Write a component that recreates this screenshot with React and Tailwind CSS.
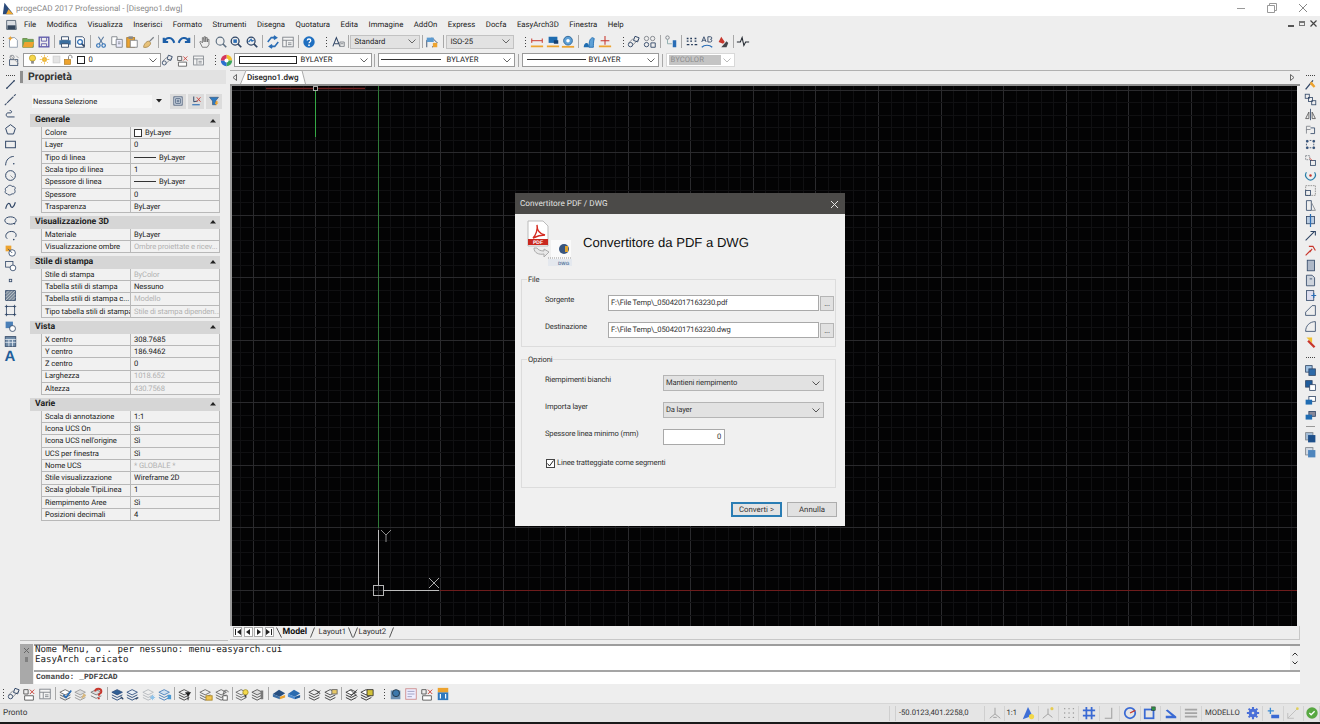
import React from "react";

const ui = { fontFamily: 'Roboto, "Noto Sans", sans-serif' };
const arial = { fontFamily: '"Liberation Sans", Arial, sans-serif' };

const Svg = ({ s = 14, children, vb = "0 0 16 16", cls = "" }) => (
  <svg width={s} height={s} viewBox={vb} fill="none" className={`shrink-0 ${cls}`}>{children}</svg>
);

const N = "#2f4565", B = "#2a6db5", O = "#eda32f", G = "#7b8087", R = "#c8362c";

const stackL = (c, extra, fill = "#eeeeee") => (
  <>
    <path d="M1 6l6-3 6 3-6 3z" fill={fill} stroke={c} />
    <path d="M1 9l6 3 6-3M1 12l6 3 6-3" stroke={c} strokeWidth="1.100" />
    {extra}
  </>
);

const icons = {
  new: <><path d="M4 3h6l3 3v8H4z" fill="#fff" stroke="#8a97a8" /><path d="M5 1l1 2 2 .5-2 1-1 2-1-2-2-1 2-.5z" fill={O} /></>,
  open: <><path d="M2 4h5l1 1h6v9H2z" fill="#6fae5a" stroke="#6b8a4c" /><path d="M2 14l2-6h11l-2 6z" fill={O} /></>,
  save: <><rect x="2.5" y="2.5" width="11" height="11" stroke="#5a55a8" strokeWidth="1.5" /><path d="M5 3v4h6V3M5 13v-3h6v3" stroke="#5a55a8" /></>,
  print: <><path d="M4 2h8v4H4z" fill="#fff" stroke={N} /><rect x="1.5" y="6" width="13" height="5" fill="#3b6f9f" /><path d="M4 10h8v4H4z" fill="#fff" stroke={N} /></>,
  preview: <><path d="M3 2h8l2 2v10H3z" fill="#fff" stroke={N} /><circle cx="8" cy="8" r="2.7" stroke={B} strokeWidth="1.4" /><path d="M10 10l3 3" stroke={N} strokeWidth="2" /></>,
  cut: <><path d="M5 2l5 8M11 2L6 10" stroke="#57779c" strokeWidth="1.2" /><circle cx="5" cy="12" r="2" stroke={B} strokeWidth="1.3" /><circle cx="11" cy="12" r="2" stroke={B} strokeWidth="1.3" /></>,
  copy: <><path d="M2 2h6v9H2z" fill="#fff" stroke={G} /><path d="M7 5h7v9H7z" fill="#eef" stroke={G} /><path d="M9 8h3M9 10h3" stroke={G} /></>,
  paste: <><rect x="2" y="3" width="9" height="11" fill={O} stroke="#a67a30" /><path d="M6 6h8v8H6z" fill="#fff" stroke={G} /><rect x="4" y="1.5" width="5" height="3" fill="#888" /></>,
  brush: <><path d="M9 7l5-5 1 1-5 5z" fill={G} /><path d="M3 14c0-3 3-7 6-7l2 2c0 3-4 6-8 5z" fill="#e8c27a" stroke="#a98a50" /></>,
  undo: <path d="M3 7c2-5 9-5 11 2M2 3v5h5" stroke="#1d5fa8" strokeWidth="2.4" />,
  redo: <path d="M13 7C11 2 4 2 2 9M14 3v5H9" stroke="#1d5fa8" strokeWidth="2.4" />,
  hand: <path d="M5 14L2 8l1-1 2 2V3l1.300 0 .7 5V2h1.500l.5 6V3h1.500l.5 5V5h1.500v6l-2 3z" fill="#eee" stroke="#666" strokeWidth=".9" />,
  zoom: <><circle cx="7" cy="7" r="4.500" stroke="#5c6e80" strokeWidth="1.300" /><path d="M10 10l4 4" stroke="#5c6e80" strokeWidth="1.800" /></>,
  zoomw: <><circle cx="7" cy="7" r="4.500" stroke={N} strokeWidth="1.500" /><rect x="5" y="5" width="4" height="4" fill={B} /><path d="M10 10l4 4" stroke={N} strokeWidth="2" /></>,
  zoomp: <><circle cx="7" cy="7" r="4.500" stroke={N} strokeWidth="1.500" /><path d="M4 8l3-3 1 2 2-1" stroke={B} strokeWidth="1.400" /><path d="M10 10l4 4" stroke={N} strokeWidth="2" /></>,
  regen: <path d="M2 8l4-5h5M14 8l-4 5H5M9 1l3 2-3 2M7 11l-3 2 3 2" stroke={B} strokeWidth="1.800" />,
  props: <><rect x="2" y="2.500" width="12" height="11" fill="#f4f4f4" stroke={G} /><path d="M2 6h12M6 6v7M8 9h4M8 11h4" stroke={G} /></>,
  help: <><circle cx="8" cy="8" r="6.500" fill="#1f6fc0" /><path d="M6 6.300C6 4 10 4 10 6.300 10 8 8 7.800 8 9.500" stroke="#fff" strokeWidth="1.500" /><circle cx="8" cy="11.600" r="1" fill="#fff" /></>,
  aa: <><path d="M1 13L5 3l4 10M3 10h4" stroke={N} strokeWidth="1.200" /><path d="M9 13V8h5v5zM10 10h3" stroke={G} /></>,
  dimst: <><path d="M2 14V6h6M8 3l6 6-6 5" stroke={N} strokeWidth="1" /><path d="M2 3h8v5H2z" fill="#5c9bd1" /><rect x="9" y="9" width="5" height="5" fill={O} /></>,
  dim1: <><path d="M2 4v5M14 4v5M2 6.500h12" stroke={R} strokeWidth="1.100" /><rect x="1" y="12" width="14" height="2" fill={O} /></>,
  dim2: <><rect x="3" y="2" width="10" height="7" fill="#1e6cb0" /><rect x="9" y="6" width="5" height="4" fill="#143f70" /><rect x="1" y="12" width="14" height="2" fill={O} /></>,
  dim3: <><circle cx="8" cy="6.500" r="5" fill="#5ea0d6" stroke="#2b6496" /><circle cx="8" cy="6.500" r="2" fill="#fff" /><rect x="1" y="12.500" width="14" height="2" fill={O} /></>,
  dim4: <><path d="M2 14c0-4 2-5 3-5 2 0 3 2 3 5z" fill="#1e6cb0" /><path d="M8 14c0-7 1-10 4-11l2 1c-1 4-1 7-1 10z" fill="#5ea0d6" stroke="#1e6cb0" /></>,
  dim5: <><path d="M8 1v10M3 6.500h10" stroke={R} strokeWidth="1.200" /><rect x="1" y="12" width="14" height="2" fill={O} /></>,
  blocks: <><path d="M2 9l5-5M6 12l7-7" stroke={G} /><circle cx="4" cy="11" r="2.500" stroke={N} /><rect x="8" y="2" width="5" height="5" stroke={N} transform="rotate(20 10 5)" /></>,
  blocks2: <><circle cx="4" cy="4" r="2.500" stroke={G} /><circle cx="11" cy="4" r="2.500" stroke={G} /><circle cx="4" cy="11" r="2.500" stroke={N} /><path d="M9 9h5v5H9z" stroke={N} /></>,
  xref: <><circle cx="4" cy="3" r="2" stroke={G} /><path d="M4 5v5h5" stroke="#8aa" /><path d="M10 6h4v8h-4z" fill={B} /></>,
  abc: <><path d="M2 4h2M6 4h2M11 4h2M2 7h2M6 7h2M11 7h2M2 11h3M7 11h2M11 11h3" stroke="#243a58" strokeWidth="1.600" /></>,
  ab: <><path d="M2 8l2.500-6L7 8M3 6h3M9 8V2h3c2 0 2 3 0 3 2 0 2 3 0 3z" stroke={N} strokeWidth="1" /><path d="M2 14c3-3 9-3 12 0" stroke={B} strokeWidth="1.300" /></>,
  spell: <><path d="M3 8l3-6 4 6-2 2z" fill={R} /><path d="M6 14l6-7 2 2-2 5z" fill="#44474c" /></>,
  pulse: <path d="M1 8h4l2-5 2 9 2-4h4" stroke="#20262e" strokeWidth="1.200" />,
  layerW: <><rect x="2" y="7" width="10" height="7" stroke={N} /><path d="M3 2l10 10M10 2l3 3" stroke="#999" /><circle cx="5" cy="4" r="2.500" stroke={G} /></>,
  bulb: <><circle cx="8" cy="6" r="4.500" fill="#f6d64a" stroke="#b89a20" /><rect x="6" y="10" width="4" height="4" fill="#8a8a8a" /></>,
  sun: <><circle cx="8" cy="8" r="3" fill="#f7c23c" stroke="#d99b1a" /><path d="M8 1v3M8 12v3M1 8h3M12 8h3M3 3l2 2M11 11l2 2M13 3l-2 2M5 11l-2 2" stroke="#f0b32a" /></>,
  grid: <rect x="3" y="3" width="10" height="10" fill="#e4e4e4" stroke="#ccc" />,
  lock: <><rect x="2" y="8" width="9" height="7" fill={O} stroke="#b07a20" /><path d="M8 8V4c0-3 5-3 5 0v2" stroke="#777" strokeWidth="1.300" /></>,
  wheel: <><path d="M8 8V1a7 7 0 0 1 7 7z" fill="#f2c12e" /><path d="M8 8h7a7 7 0 0 1-7 7z" fill="#3ba55c" /><path d="M8 8v7a7 7 0 0 1-7-7z" fill="#2b6fd0" /><path d="M8 8H1a7 7 0 0 1 7-7z" fill="#d4365e" /><circle cx="8" cy="8" r="2.500" fill="#fff" /></>,
  lineT: <><circle cx="3.500" cy="12.500" r="1" fill={G} /><circle cx="12.500" cy="3.500" r="1" fill={G} /><path d="M3 13L13 3" stroke={N} strokeWidth="1.500" /></>,
  xline: <path d="M1 15L15 1M5 11l6-6" stroke="#3a4c68" strokeWidth="1.300" strokeDasharray="3 1" />,
  pline: <path d="M13 11H5C2 11 2 6 5 6h3C10 6 10 3 7 3" stroke={N} strokeWidth="1.200" />,
  poly: <path d="M8 2l6 4.500-2.300 7H4.300L2 6.500z" stroke={N} strokeWidth="1.200" />,
  rect: <rect x="2" y="4" width="12" height="8" stroke={N} strokeWidth="1.200" />,
  arc: <><path d="M2 14C2 7 7 3 12 3" stroke={N} strokeWidth="1.200" /><circle cx="12" cy="12" r="1" fill={N} /></>,
  circle: <><circle cx="8" cy="8" r="6" stroke={N} strokeWidth="1.200" /><path d="M8 8l3 3" stroke={G} /></>,
  cloud: <path d="M4 4c1-3 5-3 6-1 3-1 5 2 3 4 2 3-1 6-3 5-2 2-5 2-6 0-3 0-3-3-2-4-1-2 0-4 2-4z" stroke={N} strokeWidth="1.100" />,
  spline: <path d="M2 12c2-8 5-8 6-4s4 3 6-4" stroke={N} strokeWidth="1.400" />,
  ellipse: <><ellipse cx="8" cy="8" rx="7" ry="4.500" stroke={N} strokeWidth="1.200" /><circle cx="13" cy="12" r="1" fill={N} /></>,
  earc: <><path d="M4 12C0 9 3 3 9 3s7 5 5 7" stroke={N} strokeWidth="1.200" /><circle cx="12" cy="13" r="1" fill={N} /></>,
  ins: <><path d="M2 2h7v7H2z" fill={O} /><circle cx="10" cy="11" r="4" stroke={N} fill="#fff" /><path d="M5 6l5 5" stroke={N} /></>,
  mkb: <><rect x="2" y="3" width="9" height="7" stroke={N} /><circle cx="11" cy="11" r="3.500" stroke={N} fill="#fff" /></>,
  point: <rect x="6.500" y="6.500" width="3" height="3" stroke={N} />,
  hatch: <><rect x="2" y="2" width="12" height="12" fill="#7b8a9a" stroke={N} /><path d="M2 6l4-4M2 10l8-8M2 14L14 2M6 14l8-8M10 14l4-4" stroke="#e4e4e4" strokeWidth=".7" /></>,
  region: <><path d="M3 3h10v10H3z" stroke={N} /><path d="M3 1v4M13 1v4M3 11v4M13 11v4M1 3h4M11 3h4M1 13h4M11 13h4" stroke={N} /></>,
  wipe: <><rect x="2" y="2" width="9" height="8" fill="#4b80b8" /><rect x="7" y="7" width="7" height="7" rx="3" fill="#fff" stroke={N} /></>,
  table: <><rect x="1.500" y="2" width="13" height="12" fill="#6f8aa6" stroke={N} /><path d="M1.500 5.500h13M1.500 9h13M6 5.500V14M10.500 5.500V14" stroke="#e8eef4" /></>,
  erase: <><path d="M2 14L11 3" stroke={N} strokeWidth="1.600" /><path d="M9 4l5 6-2 2-5-5z" fill={O} /></>,
  copy2: <><rect x="1.500" y="1.500" width="5" height="5" stroke={N} /><rect x="5.500" y="5.500" width="5" height="5" stroke={N} /><rect x="9.500" y="9.500" width="5" height="5" stroke={N} /></>,
  mirror: <><path d="M8 1v14" stroke={N} /><path d="M6 5L2 13h4zM10 5l4 8h-4z" stroke="#555" /></>,
  offs: <><path d="M3 9V4h5M3 13V8h5" stroke={G} /><path d="M8 6h5v7H8" stroke={N} /></>,
  array: <><path d="M3 3h2v2H3zM11 3h2v2h-2zM3 11h2v2H3zM11 11h2v2h-2z" fill={B} stroke={N} /><path d="M7 3h2M7 12h2M3 7v2M12 7v2" stroke={N} /></>,
  move: <><rect x="2" y="2" width="5" height="5" stroke={G} strokeDasharray="2 1" /><rect x="8" y="8" width="6" height="6" stroke={N} /><path d="M7 5l3 3" stroke={R} /></>,
  rotate: <><path d="M3 4a6 6 0 1 0 10 0" stroke="#2a7ea8" strokeWidth="1.500" /><circle cx="8" cy="8" r="1.500" fill={R} /></>,
  scale: <><rect x="2" y="2" width="12" height="12" stroke="#888" strokeDasharray="2 1" /><rect x="2" y="8" width="6" height="6" stroke={N} /></>,
  stretch: <><path d="M3 2h6v12H3z" stroke={N} /><path d="M9 4l5 10H9" stroke={G} /></>,
  trim: <><rect x="3" y="3" width="10" height="9" stroke={N} fill="#b9cbe0" /><path d="M8 0v16" stroke={B} strokeWidth="1.500" /></>,
  extend: <path d="M2 14L13 3M8 3h6v5" stroke={N} strokeWidth="1.300" />,
  breakk: <path d="M2 14L8 8M6 3h5l3 5M10 6l-3 4" stroke={R} strokeWidth="1.400" />,
  page: <rect x="4" y="1.500" width="9" height="13" fill="#aeb8c8" stroke={N} />,
  page2: <path d="M3 1.500h7l3 3v10H3zM7 6h3" fill="#cdd3dc" stroke={N} />,
  page3: <><rect x="3" y="2" width="9" height="12" fill="#dde" stroke={N} /><path d="M9 8h6M12 5v6" stroke={B} strokeWidth="1.500" /></>,
  chamfer: <path d="M2 14V10L10 2h4v12z" fill="#eee" stroke={N} strokeWidth="1" />,
  fillet: <path d="M2 14C2 7 7 2 14 2v12z" fill="#eee" stroke={N} strokeWidth="1" />,
  explode: <><path d="M3 3h7v7z" fill="#f1c232" /><path d="M6 6l8 8-2 2-8-8z" fill={R} /></>,
  stack1: <><rect x="2" y="2" width="8" height="8" fill="#9ec1e2" stroke={N} /><rect x="6" y="6" width="8" height="8" fill="#2e6aa8" stroke={N} /></>,
  stack2: <><rect x="2" y="2" width="8" height="8" fill="#1f5c9c" stroke={N} /><rect x="7" y="7" width="7" height="7" fill="#fff" stroke={N} /></>,
  stack3: <><rect x="6" y="3" width="8" height="6" fill="#fff" stroke={N} /><rect x="2" y="7" width="8" height="6" fill="#1f6cb2" /></>,
  stack4: <><rect x="6" y="3" width="8" height="6" fill="#889" stroke={N} /><rect x="2" y="7" width="8" height="6" fill="#1f6cb2" /></>,
  stack5: <><rect x="2" y="2" width="9" height="9" fill="#a5bdd6" stroke={G} /><rect x="5" y="5" width="9" height="9" fill="#1d4f8a" /></>,
  stack6: <><rect x="2" y="2" width="9" height="9" fill="#cfd8e4" stroke={G} /><rect x="5" y="5" width="9" height="9" fill="#4e85bd" /></>,
  selc: <><rect x="5" y="3" width="10" height="10" fill="#eee" stroke={G} /><path d="M1 9l3-5 3 5z" fill="none" stroke={N} /><path d="M3 2l8 8" stroke={G} /></>,
  filt: <><path d="M2 3h12L10 8v5H6V8z" fill="#2d7ac0" stroke={N} strokeWidth=".7" /><path d="M11 8l-2 4h2l-1 3 4-5h-2l1-2z" fill={O} /></>,
  qs: <><rect x="2.500" y="2.500" width="11" height="11" fill="#e2e8f0" stroke={N} /><rect x="5" y="5" width="6" height="6" stroke={N} /><path d="M8 6v4M6 8h4" stroke={N} /></>,
  ss: <><path d="M5 2v7l5-1" stroke={N} strokeWidth="1.300" /><path d="M9 3l5 6M14 3l-5 6" stroke={R} strokeWidth="1.100" /><path d="M3 13h10" stroke={B} strokeWidth="1.500" /></>,
  web: <><rect x="2" y="4" width="11" height="10" fill="#6c90b3" /><circle cx="8" cy="7" r="4" fill="#3c78ac" stroke="#234" /></>,
  dwgbox: <><rect x="2" y="2" width="12" height="12" fill="#eef" stroke="#c88" /><path d="M4 5h8M4 8h8M4 11h5" stroke="#99b" /></>,
  attach: <><path d="M2 3h5v5H2z" stroke="#555" /><path d="M9 3l5 5M14 3l-5 5" stroke={R} /><path d="M3 10h10v5H3z" fill="#fff" stroke="#555" /></>,
  pdfi: <><rect x="2" y="6" width="12" height="9" fill="#2f78bd" /><rect x="2" y="1" width="12" height="5" fill={O} /><path d="M5 8v5M11 8v5" stroke="#fff" strokeWidth="1.300" /></>,
  tri: <path d="M8 2v7M8 9l-6 5M8 9l6 5M6 13h4" stroke="#9a9a9a" strokeWidth="1" />,
  triB: <><path d="M2 15L8 1l5 10z" fill="#3f6fd6" /><circle cx="12" cy="12" r="3" fill="#f2d84a" /></>,
  triS: <><path d="M8 3v6M8 9l-6 5M8 9l5 4" stroke="#9a9a9a" /><circle cx="12.500" cy="3" r="1.800" fill="#e5cb50" /></>,
  dots: <path d="M3 3h.1M8 3h.1M13 3h.1M3 8h.1M8 8h.1M13 8h.1M3 13h.1M8 13h.1M13 13h.1" stroke="#9a9a9a" strokeWidth="1.600" strokeLinecap="round" />,
  gridB: <path d="M1 5h14M1 11h14M5 1v14M11 1v14" stroke="#3a6ad4" strokeWidth="2" />,
  ortho: <path d="M10 2v12H2" stroke="#a0a0a0" strokeWidth="1.200" />,
  polar: <><circle cx="8" cy="8" r="6" stroke="#3a6ad4" strokeWidth="2" /><path d="M8 8l6-3" stroke={R} strokeWidth="1.400" /></>,
  osnap: <><rect x="2" y="4" width="10" height="10" stroke="#3a6ad4" strokeWidth="2" /><rect x="10" y="1" width="4" height="4" fill="#2f8f46" stroke="#111" strokeWidth=".5" /></>,
  otrack: <path d="M2 14h12V12L4 4 2 5l7 6H2z" fill="#3a6ad4" />,
  lw: <path d="M1 4h14M1 8h14M1 12h14" stroke="#a5a5a5" strokeWidth="2" />,
  gear: <><circle cx="8" cy="8" r="5" fill="#4a6fd8" /><path d="M8 1v14M1 8h14M3 3l10 10M13 3L3 13" stroke="#4a6fd8" strokeWidth="2.400" /><circle cx="8" cy="8" r="1.500" fill="#ddd" /></>,
  plus: <><path d="M5 2v7M2 5.500h7" stroke="#3a8ad4" strokeWidth="1.500" /><rect x="6" y="10" width="9" height="4" fill="#3a6ad4" /></>,
  axis: <><path d="M2 14L13 3M2 14V8M2 14h7" stroke="#bbb" /><circle cx="13" cy="3" r="1.500" fill="#e0cf58" /></>,
  ok: <><circle cx="8" cy="8" r="6.500" fill="#58a842" /><path d="M5 8l2 2 4-4" stroke="#fff" strokeWidth="1.500" /></>,
  lCheck: stackL("#666", <path d="M5 9l3 3 6-8" stroke={B} strokeWidth="1.800" />, "#fff"),
  lOrange: stackL("#999", <path d="M8 14l6-4-3-3z" fill="#d8b67a" />, "#ddd"),
  lRed: <><path d="M1 6l6-3 6 3-6 3z" fill="#ddd" stroke="#777" /><path d="M1 10l6 3 6-3" stroke="#777" /><path d="M6 5c0-4 7-4 7 0 0 3-3 2-3 5M10 12v2" stroke={R} strokeWidth="2.200" /></>,
  lNavy: stackL("#2f4f7f", <path d="M11 11l3 3" stroke={N} strokeWidth="1.500" />, "#2f5f95"),
  lNavy2: stackL("#2f4f7f", <path d="M11 14l3-2" stroke={N} strokeWidth="1.500" />, "#e8eef5"),
  lStar: stackL("#b5b9be", <path d="M12 9v6M9 12h6M10 10l4 4M14 10l-4 4" stroke="#88c0ea" />, "#eee"),
  lBlue: stackL("#4a7fb8", <rect x="11" y="9" width="4" height="5" fill="#4a9ad4" />, "#cfe0f0"),
  lFun: stackL("#444", <path d="M8 6h7l-3 4v5h-1v-5z" fill="#222" />, "#eee"),
  lLock: <>{stackL("#666", null, "#eee")}<rect x="8" y="10" width="7" height="5" fill="#f1c64e" stroke="#a8862a" /></>,
  lUnl: <>{stackL("#666", null, "#eee")}<path d="M10 9V6c0-3 5-3 5 0" stroke="#555" /><rect x="9" y="10" width="5" height="5" fill="#fff" stroke="#555" /></>,
  lBulb: <>{stackL("#666", null, "#eee")}<circle cx="12" cy="6" r="3" fill="#f4d94c" stroke="#a8962a" /><rect x="11" y="9" width="2" height="3" fill="#444" /></>,
  lGray: stackL("#555", <path d="M11 4h3v10h-3z" fill="#777" />, "#ddd"),
  lSolid: <><path d="M1 8l7-5 7 4-6 4z" fill="#274f80" /><path d="M1 8v3l8 3V11z" fill="#3a6ea5" /><path d="M9 14l6-2V9l-6 2z" fill={O} /></>,
  lSolid2: <><path d="M1 8l7-5 7 4-6 4z" fill="#2a6bb0" /><path d="M1 8v3l8 3V11z" fill="#4a8ad0" /><path d="M9 14l6-2V9l-6 2z" fill="#1f5a9a" /></>,
  lS1: stackL("#444", <path d="M10 4l4 4M14 4l-4 4" stroke="#444" />, "#eee"),
  lS2: stackL("#444", <rect x="9" y="3" width="6" height="5" fill="#e8c866" stroke="#666" />, "#eee"),
  lS3: stackL("#333", <path d="M6 3l8 8M14 3L6 11" stroke="#333" />, "#fff"),
  lS4: stackL("#333", <path d="M8 3h7v7H8z" fill="#d3c23a" stroke="#333" />, "#fff"),
};

const Ic = ({ n, s = 14, w = 15.6 }) => (
  <div className="flex items-center justify-center shrink-0" style={{ width: w }}>
    <Svg s={s}>{icons[n]}</Svg>
  </div>
);

const Sep = ({ w = 5.2 }) => (
  <div className="flex justify-center shrink-0" style={{ width: w }}>
    <div className="w-px h-[13px] bg-[#a8a8a8]" />
  </div>
);

const Grip = () => (
  <div className="flex flex-col gap-[2px] w-[1px] shrink-0">
    {[0, 1, 2, 3].map((i) => <div key={i} className="w-px h-px bg-[#444]" />)}
  </div>
);

const Row = ({ items }) =>
  items.map((it, i) =>
    it === "|" ? <Sep key={i} /> : <Ic key={i} n={it} />
  );

const Chevron = ({ c = "#666" }) => (
  <svg width="8" height="5" viewBox="0 0 8 5" fill="none" className="shrink-0">
    <path d="M.5 .5L4 4l3.500-3.500" stroke={c} />
  </svg>
);

const Combo = ({ w, children, grey, faint }) => (
  <div
    className={`flex items-center h-[14px] px-[2px] border shrink-0 text-[7.700px] text-[#222] ${grey ? "bg-[#e2e2e2] border-[#c2c2c2]" : faint ? "bg-white border-[#d8d8d8]" : "bg-white border-[#9a9a9a]"}`}
    style={{ width: w, ...ui }}
  >
    <div className="flex-1 flex items-center min-w-0">{children}</div>
    <div className="pr-[1px]"><Chevron c={faint ? "#bbb" : "#666"} /></div>
  </div>
);

const menus = ["File", "Modifica", "Visualizza", "Inserisci", "Formato", "Strumenti", "Disegna", "Quotatura", "Edita", "Immagine", "AddOn", "Express", "Docfa", "EasyArch3D", "Finestra", "Help"];

const TitleBar = () => (
  <div className="h-[16px] bg-white flex items-center shrink-0">
    <svg width="13" height="13" viewBox="0 0 16 16" className="ml-[2px]"><path d="M1 15L3 1l11 14z" fill="#2a4a7a" /><path d="M8 9l6 6H5z" fill="#efa82f" /></svg>
    <div className="ml-[1px] text-[8.150px] text-[#8a8a8a]" style={ui}>progeCAD 2017 Professional - [Disegno1.dwg]</div>
    <div className="ml-auto flex items-center">
      <svg width="10" height="10" viewBox="0 0 10 10" className="mr-[21px]"><path d="M1 5.500h8" stroke="#999" /></svg>
      <svg width="10" height="10" viewBox="0 0 10 10" className="mr-[21px]"><path d="M.5 2.500h7v7h-7zM2.500 2.500V.5h7v7h-2" stroke="#999" fill="none" /></svg>
      <svg width="10" height="10" viewBox="0 0 10 10" className="mr-[12px]"><path d="M1 1l8 8M9 1L1 9" stroke="#888" /></svg>
    </div>
  </div>
);

const MenuBar = () => (
  <div className="h-[17px] flex items-center shrink-0 text-[7.800px] text-[#222]" style={ui}>
    <svg width="13" height="13" viewBox="0 0 16 16" className="ml-[5px] mr-[6px]">
      <path d="M2 3h11l1 11H2z" fill="#d9dde2" stroke="#4a5a6a" /><path d="M3 9h10v5H3z" fill="#33465c" />
    </svg>
    <div className="flex gap-[10.500px]">
      {menus.map((m) => <span key={m}>{m}</span>)}
    </div>
    <div className="ml-auto flex items-center gap-[5px] pr-[3px] pb-[2px]">
      <div className="w-[6px] h-[2px] mt-[4px] bg-[#555]" />
      <div className="w-[6px] h-[5px] border border-[#777] border-t-2" />
      <svg width="7" height="7" viewBox="0 0 7 7"><path d="M.5 .5l6 6M6.500 .5l-6 6" stroke="#444" strokeWidth="1.200" /></svg>
    </div>
  </div>
);

const Toolbar1 = () => (
  <div className="h-[17px] flex items-center shrink-0 pl-[3px]">
    <Grip />
    <div className="w-[1px]" />
    <Row items={["new", "open", "save", "|", "print", "preview", "|", "cut", "copy", "paste", "brush", "|", "undo", "redo", "|", "hand", "zoom", "zoomw", "zoomp", "|", "regen", "props", "|", "help"]} />
    <div className="w-[9px]" />
    <Grip />
    <div className="w-[4px]" />
    <Ic n="aa" />
    <Sep w={4} />
    <Combo w={70} grey><span className="pl-[1px]">Standard</span></Combo>
    <Sep w={4} />
    <Ic n="dimst" w={16} />
    <Sep w={6} />
    <Combo w={68} grey><span className="pl-[1px]">ISO-25</span></Combo>
    <div className="w-[11px]" />
    <Grip />
    <div className="w-[3px]" />
    <Row items={["dim1", "dim2", "dim3", "|", "dim4", "dim5"]} />
    <div className="w-[10px]" />
    <Grip />
    <div className="w-[3px]" />
    <Row items={["blocks", "blocks2", "|", "xref", "|", "abc", "ab", "spell", "|", "pulse"]} />
  </div>
);

const Line = ({ w }) => <div className="h-px bg-[#333] shrink-0" style={{ width: w }} />;

const Toolbar2 = () => (
  <div className="h-[20px] flex items-center shrink-0 pl-[3px]">
    <Grip />
    <div className="w-[3px]" />
    <Ic n="layerW" s={13} />
    <Combo w={138}>
      <div className="flex items-center gap-[1px] pl-[1px]">
        <Ic n="bulb" s={11} w={11} />
        <Ic n="sun" s={11} w={11} />
        <Ic n="grid" s={11} w={11} />
        <Ic n="lock" s={11} w={11} />
        <div className="w-[8px] h-[8px] border border-[#222] bg-white ml-[2px]" />
        <span className="ml-[3px]">0</span>
      </div>
    </Combo>
    <Ic n="blocks" s={13} w={14} />
    <Ic n="attach" s={13} w={15} />
    <Ic n="props" s={13} w={17} />
    <div className="w-[8px]" />
    <Grip />
    <div className="w-[4px]" />
    <Ic n="wheel" s={13} w={13} />
    <div className="w-[1px]" />
    <Combo w={138}>
      <div className="w-[58px] h-[8px] border border-[#222] bg-white ml-[2px] shrink-0" />
      <span className="ml-[4px]">BYLAYER</span>
    </Combo>
    <Sep w={6} />
    <Combo w={137}>
      <Line w={60} />
      <span className="ml-[6px]">BYLAYER</span>
    </Combo>
    <Sep w={7} />
    <Combo w={137}>
      <div className="ml-[2px]" />
      <Line w={59} />
      <span className="ml-[3px]">BYLAYER</span>
    </Combo>
    <Sep w={7} />
    <Combo w={69} faint>
      <div className="w-[52px] h-[10px] bg-[#c4c4c4] flex items-center text-[#8e8e8e] pl-[2px]">BYCOLOR</div>
    </Combo>
  </div>
);

const leftTools = ["lineT", "xline", "pline", "poly", "rect", "arc", "circle", "cloud", "spline", "ellipse", "earc", "ins", "mkb", "point", "hatch", "region", "wipe", "table"];

const LeftBar = () => (
  <div className="w-[20px] shrink-0 flex flex-col items-center pt-[5px]">
    <div className="w-[9px] h-px mb-[1px] border-t border-dotted border-[#444]" />
    {leftTools.map((t, i) => (
      <div key={i} className="h-[15.100px] flex items-center justify-center"><Svg s={13}>{icons[t]}</Svg></div>
    ))}
    <div className="text-[15px] leading-[16px] text-[#1f5e9a] font-bold" style={arial}>A</div>
  </div>
);

const groups = [
  ["Generale", [
    ["Colore", "ByLayer", "box"], ["Layer", "0"], ["Tipo di linea", "ByLayer", "line"], ["Scala tipo di linea", "1"],
    ["Spessore di linea", "ByLayer", "line"], ["Spessore", "0"], ["Trasparenza", "ByLayer"],
  ]],
  ["Visualizzazione 3D", [["Materiale", "ByLayer"], ["Visualizzazione ombre", "Ombre proiettate e ricev...", "dis"]]],
  ["Stile di stampa", [
    ["Stile di stampa", "ByColor", "dis"], ["Tabella stili di stampa", "Nessuno"], ["Tabella stili di stampa c...", "Modello", "dis"],
    ["Tipo tabella stili di stampa", "Stile di stampa dipenden...", "dis"],
  ]],
  ["Vista", [["X centro", "308.7685"], ["Y centro", "186.9462"], ["Z centro", "0"], ["Larghezza", "1018.652", "dis"], ["Altezza", "430.7568", "dis"]]],
  ["Varie", [
    ["Scala di annotazione", "1:1"], ["Icona UCS On", "Sì"], ["Icona UCS nell'origine", "Sì"], ["UCS per finestra", "Sì"],
    ["Nome UCS", "* GLOBALE *", "dis"], ["Stile visualizzazione", "Wireframe 2D"], ["Scala globale TipiLinea", "1"], ["Riempimento Aree", "Sì"], ["Posizioni decimali", "4"],
  ]],
];

const Panel = () => (
  <div className="w-[210px] shrink-0 text-[#222]" style={ui}>
    <div className="h-[14px] w-[206px] bg-[#e2e2e2] flex items-center">
      <div className="w-[3px] h-[12px] bg-[#8f8f8f] mr-[5px]" />
      <span className="text-[10.500px] font-bold text-[#333]">Proprietà</span>
    </div>
    <div className="flex items-center h-[14px] mt-[10px] pl-[12px]">
      <div className="w-[120px] h-[13px] bg-[#f6f6f6] pl-[1px] text-[7.600px] leading-[13px]">Nessuna Selezione</div>
      <svg width="6" height="4" viewBox="0 0 6 4" className="ml-[4px]"><path d="M0 0h6L3 3.500z" fill="#222" /></svg>
      <div className="flex gap-[2px] ml-[8px]">
        {["qs", "ss", "filt"].map((n) => (
          <div key={n} className="w-[16px] h-[15px] bg-[#dcdcdc] flex items-center justify-center"><Svg s={12}>{icons[n]}</Svg></div>
        ))}
      </div>
    </div>
    <div className="ml-[10px] w-[190px] mt-[6px] flex flex-col gap-[2.500px]">
      {groups.map(([title, rows]) => (
        <div key={title}>
          <div className="h-[13px] bg-[#d6d6d6] flex items-center justify-between pl-[5px] pr-[4px] text-[8.700px] font-bold">
            <span>{title}</span>
            <svg width="6" height="4" viewBox="0 0 6 4"><path d="M0 3.500h6L3 0z" fill="#222" /></svg>
          </div>
          <div className="ml-[11px] border-x border-[#b8b8b8]">
            {rows.map(([k, v, kind]) => (
              <div key={k} className="flex h-[12.320px] border-b border-[#b8b8b8] bg-[#f1f1f1] text-[7.600px] tracking-[-0.05px]">
                <div className="w-[89px] shrink-0 pl-[3px] flex items-center border-r border-[#b8b8b8] whitespace-nowrap overflow-hidden">{k}</div>
                <div className={`flex-1 pl-[3px] flex items-center whitespace-nowrap overflow-hidden ${kind === "dis" ? "text-[#b2b2b2] tracking-[-0.12px]" : ""}`}>
                  {kind === "box" && <div className="w-[8px] h-[8px] border border-[#333] bg-white mr-[3px]" />}
                  {kind === "line" && <div className="w-[22px] h-px bg-[#333] mr-[3px]" />}
                  {v}
                </div>
              </div>
            ))}
          </div>
        </div>
      ))}
    </div>
  </div>
);

const Canvas = () => {
  const vs = [], hs = [];
  for (let i = -2; i < 90; i++) vs.push(252.500 + i * 12.51);
  for (let i = -2; i < 50; i++) hs.push(89.500 + i * 12.51);
  return (
    <svg width="1065" height="540" viewBox="232 86 1065 540" className="block bg-[#030304]">
      {vs.map((x, i) => <path key={i} d={`M${Math.round(x) + 0.5} 86V626`} stroke={(i - 2) % 5 === 0 ? "#2a2a2d" : "#101012"} />)}
      {hs.map((y, i) => <path key={i} d={`M232 ${Math.round(y) + 0.5}H1297`} stroke={(i - 2) % 5 === 0 ? "#2a2a2d" : "#101012"} />)}
      <path d="M378.500 86V528" stroke="#2f7a38" />
      <path d="M315.500 90V137" stroke="#35a845" />
      <path d="M266 88.500H365" stroke="#6b1f1f" strokeWidth="1.300" />
      <rect x="313.500" y="86.500" width="4" height="4" stroke="#aaa" />
      <path d="M440 590.500H1297" stroke="#6e1c1c" />
      <path d="M378.500 530V585M383 590.500H439" stroke="#bdbdbd" />
      <rect x="373.500" y="585.500" width="10" height="10" stroke="#b5b5b5" fill="none" />
      <path d="M381 530l5 5 5-5M386 535v7" stroke="#8c8c8c" />
      <path d="M429 578l10 10M439 578l-10 10" stroke="#a8a8a8" />
    </svg>
  );
};

const Nav = ({ d }) => (
  <div className="w-[9px] h-[10px] bg-white border border-[#aaa] flex items-center justify-center">
    <svg width="6" height="6" viewBox="0 0 6 6"><path d={d} fill="#222" /></svg>
  </div>
);

const Slash = ({ back, w = 7 }) => (
  <svg width={w} height="11" viewBox={`0 0 ${w} 11`} className="shrink-0">
    <path d={back ? `M.5 .5L${w - 0.5} 10.500` : `M.5 10.500L${w - 0.5} .5`} stroke="#555" fill="none" />
  </svg>
);

const Drawing = () => (
  <div className="w-[1070px] shrink-0 flex flex-col border-t border-[#b0b0b0]">
    <div className="h-[15px] flex items-end pl-[2px] pr-[4px] border-b-2 border-[#8f8f8f] bg-[#eeeeee]">
      <svg width="5" height="7" viewBox="0 0 5 7" className="mb-[3px]"><path d="M4.500 .5L1 3.500l3.500 3z" stroke="#666" fill="none" /></svg>
      <svg width="7" height="14" viewBox="0 0 7 14" className="ml-[3px] shrink-0"><path d="M0 14L6 0h1v14z" fill="#fff" /><path d="M.5 14L6 .5h1" stroke="#aaa" fill="none" /></svg>
      <div className="h-[14px] w-[54px] flex items-center bg-white border-t border-[#aaa] text-[8.100px] font-medium text-[#222]" style={ui}>Disegno1.dwg</div>
      <svg width="5" height="14" viewBox="0 0 5 14" className="shrink-0"><path d="M0 .5h1L5 14H0z" fill="#fff" /><path d="M0 .5h1L4.500 14" stroke="#aaa" fill="none" /></svg>
      <svg width="5" height="7" viewBox="0 0 5 7" className="ml-auto mr-[1px] mb-[3px]"><path d="M.5 .5L4 3.500.5 6.500z" stroke="#666" fill="none" /></svg>
    </div>
    <div className="flex border-l-2 border-[#9a9a9a]"><Canvas /></div>
    <div className="h-[14px] flex items-center pb-[1px] pl-[3px] border-b border-[#c8c8c8] border-r text-[7.800px] text-[#333]" style={ui}>
      <div className="flex gap-[1.500px]">
        <Nav d="M0 0h1v6H0zM6 0L2 3l4 3z" />
        <Nav d="M5 0L1 3l4 3z" />
        <Nav d="M1 0l4 3-4 3z" />
        <Nav d="M5 0h1v6H5zM0 0l4 3-4 3z" />
      </div>
      <div className="w-[2px]" />
      <Slash back w={6} />
      <span className="w-[28px] pl-[1px] pt-[1px] font-bold text-[8.800px] leading-[11px] text-[#111]">Model</span>
      <Slash w={5} />
      <div className="w-[4px]" />
      <span className="w-[29px] whitespace-nowrap">Layout1</span>
      <Slash back w={5} />
      <Slash w={5} />
      <span className="w-[31px] pl-[1px] whitespace-nowrap">Layout2</span>
      <Slash w={5} />
    </div>
  </div>
);

const rightTop = ["erase", "copy2", "mirror", "offs", "array", "move", "rotate", "scale", "stretch", "trim", "extend", "breakk", "page", "page2", "page3", "chamfer", "fillet", "explode"];
const rightBottom = ["stack1", "stack2", "stack3", "stack4"];
const rightBottom2 = ["stack5", "stack6"];

const RTool = ({ n }) => <div className="h-[15.100px] flex items-center justify-center"><Svg s={13}>{icons[n]}</Svg></div>;

const RightBar = () => (
  <div className="w-[20px] shrink-0 flex flex-col items-center pt-[5px]">
    <div className="w-[9px] border-t border-dotted border-[#444] mb-[1px]" />
    {rightTop.map((t) => <RTool key={t} n={t} />)}
    <div className="w-[9px] border-t border-dotted border-[#444] mt-[8px] mb-[5px]" />
    {rightBottom.map((t) => <RTool key={t} n={t} />)}
    <div className="w-[9px] h-px bg-[#999] my-[3px]" />
    {rightBottom2.map((t) => <RTool key={t} n={t} />)}
  </div>
);

const Command = () => (
  <div className="h-[44px] shrink-0 pl-[20px] pr-[20px]">
    <div className="h-px w-[208px] bg-[#bdbdbd]" />
    <div className="h-[3px]" />
    <div className="h-[40px] flex">
      <div className="w-[13px] bg-[#a9a9a9] flex flex-col items-center pt-[3px] gap-[3px]">
        <svg width="7" height="7" viewBox="0 0 7 7"><path d="M1 1l5 5M6 1L1 6" stroke="#666" /></svg>
        <div className="w-[3px] h-[5px] bg-[#808080]" />
      </div>
      <div className="w-[1px]" />
      <div className="flex-1 flex flex-col">
        <div className="h-[26px] flex border-t-2 border-[#9d9d9d] bg-white">
          <div className="flex-1 pl-[1px] text-[9.150px] leading-[9.500px] text-[#222] whitespace-pre" style={{ fontFamily: '"DejaVu Sans Mono", monospace' }}>
            {"Nome Menu, o . per nessuno: menu-easyarch.cui\nEasyArch caricato"}
          </div>
          <div className="w-[10px] flex flex-col items-center gap-[5px] pt-[6px] bg-[#f1f1f1]">
            <svg width="6" height="4" viewBox="0 0 6 4"><path d="M.5 3.500L3 1l2.500 2.500" stroke="#333" fill="none" /></svg>
            <svg width="6" height="4" viewBox="0 0 6 4"><path d="M.5 .5L3 3 5.500 .5" stroke="#333" fill="none" /></svg>
          </div>
        </div>
        <div className="h-[14px] border-t-2 border-[#a5a5a5] bg-white pl-[2px] text-[8px] leading-[12px] font-bold text-[#444]" style={{ fontFamily: '"Liberation Mono", monospace' }}>Comando: _PDF2CAD</div>
      </div>
    </div>
  </div>
);

const BottomBar = () => (
  <div className="h-[19px] shrink-0 flex items-center pl-[3px]">
    <Grip />
    <div className="w-[2px]" />
    <Row items={["blocks", "attach", "props", "|", "lCheck", "lOrange", "lRed", "|", "lNavy", "lNavy2", "lStar", "lBlue", "|", "lFun", "|", "lLock", "lUnl", "|", "lBulb", "lGray", "|", "lSolid", "lSolid2", "|", "lS1", "lS2", "|", "lS3", "lS4"]} />
    <div className="w-[9px]" />
    <Grip />
    <div className="w-[3px]" />
    <Row items={["web", "dwgbox", "attach", "pdfi"]} />
  </div>
);

const SbI = ({ n, w = 20.4 }) => (
  <div className="h-[15px] flex items-center justify-center border-r border-[#d2d2d2] shrink-0" style={{ width: w }}><Svg s={14}>{icons[n]}</Svg></div>
);

const Status = () => (
  <div className="h-[19px] shrink-0 flex items-center bg-[#e5e5e5] text-[7.700px] text-[#333] border-t border-[#d6d6d6]" style={ui}>
    <span className="ml-[3px] text-[8.200px]">Pronto</span>
    <div className="ml-auto w-px h-[15px] bg-[#cfcfcf]" />
    <div className="w-[5px]" />
    <div className="w-px h-[15px] bg-[#cfcfcf]" />
    <div className="w-[88px] pl-[3px] whitespace-nowrap">-50.0123,401.2258,0</div>
    <div className="w-px h-[15px] bg-[#cfcfcf]" />
    <SbI n="tri" />
    <span className="w-[13px] text-center">1:1</span>
    {["triB", "triS", "dots", "gridB", "ortho", "polar", "osnap", "otrack", "lw"].map((n) => <SbI key={n} n={n} />)}
    <span className="w-[41px] text-center text-[7.700px]">MODELLO</span>
    {["gear", "plus", "axis"].map((n) => <SbI key={n} n={n} />)}
    <SbI n="ok" w={16} />
  </div>
);

const Input = ({ w, children, right }) => (
  <div
    className={`h-[16px] bg-white border border-[#a9a9a9] px-[2px] leading-[14px] text-[#333] shrink-0 ${right ? "text-right pr-[3px]" : ""}`}
    style={{ width: w }}
  >{children}</div>
);

const Sel = ({ children }) => (
  <div className="w-[161px] h-[16px] bg-[#e2e2e2] border border-[#b5b5b5] flex items-center justify-between px-[2px] pr-[3px] text-[#333]">
    <span>{children}</span><Chevron c="#555" />
  </div>
);

const Legend = ({ children }) => (
  <div className="-mt-[6px] ml-[5px] w-fit px-[1px] h-[12px] leading-[12px] bg-[#f0f0f0] text-[#333]">{children}</div>
);

const Dlg = () => (
  <div className="absolute left-[515px] top-[193px] w-[330px] h-[333px] flex flex-col bg-[#f0f0f0]" style={ui}>
    <div className="h-[21px] bg-[#4b4a48] flex items-center justify-between pl-[5px] pr-[6px] pt-[1px] text-[8.200px] text-[#e2e2e2]">
      <span>Convertitore PDF / DWG</span>
      <svg width="9" height="9" viewBox="0 0 9 9"><path d="M1 1l7 7M8 1L1 8" stroke="#e6e6e6" /></svg>
    </div>
    <div className="h-[65px] flex items-start pl-[12px] pt-[6px]">
      <svg width="46" height="46" viewBox="0 0 46 46" className="shrink-0">
        <path d="M1 1h15l5 5v20H1z" fill="#fff" stroke="#bbb" />
        <path d="M6 18c3-3 5-9 4-13 0 5 3 9 8 10-5 0-8 1-12 3z" fill="none" stroke="#d42a20" strokeWidth="1.400" />
        <rect x="1" y="19" width="20" height="6" fill="#c9281f" />
        <text x="6" y="24.300" fontSize="5" fontWeight="700" fill="#fff" style={arial}>PDF</text>
        <path d="M7 28c0 5 5 7 10 6v3l5-5-5-3v2c-3 0-6-1-7-3z" fill="#e8e8e8" stroke="#aaa" />
        <rect x="24" y="20" width="20" height="25" fill="#fafafa" />
        <circle cx="37" cy="29" r="5" fill="#38557e" />
        <path d="M38 26h3v6h-3z" fill="#e0a42e" />
        <path d="M21 38h23" stroke="#999" strokeDasharray="1 1" />
        <rect x="21" y="39" width="24" height="7" fill="#e4e8ee" />
        <text x="31" y="45" fontSize="4.600" fontWeight="700" fill="#5878a0" style={arial}>DWG</text>
      </svg>
      <div className="ml-[10px] mt-[15px] text-[13.100px] leading-[16px] text-[#111] whitespace-nowrap" style={arial}>Convertitore da PDF a DWG</div>
    </div>
    <div className="mx-[6px] w-[315px] h-[68px] border border-[#dcdcdc] text-[7.600px] tracking-[-0.15px] text-[#333]">
      <Legend>File</Legend>
      <div className="flex items-center h-[16px] mt-[9px] ml-[23px]">
        <span className="w-[63px] mb-[6px]">Sorgente</span>
        <Input w={211}>F:\File Temp\_05042017163230.pdf</Input>
        <div className="ml-[1px] w-[14px] h-[15px] bg-[#e1e1e1] border border-[#b5b5b5] leading-[14px] text-center">...</div>
      </div>
      <div className="flex items-center h-[16px] mt-[11px] ml-[23px]">
        <span className="w-[63px] mb-[6px]">Destinazione</span>
        <Input w={211}>F:\File Temp\_05042017163230.dwg</Input>
        <div className="ml-[1px] w-[14px] h-[15px] bg-[#e1e1e1] border border-[#b5b5b5] leading-[14px] text-center">...</div>
      </div>
    </div>
    <div className="mx-[6px] mt-[12px] w-[315px] h-[129px] border border-[#dcdcdc] text-[7.600px] tracking-[-0.15px] text-[#333]">
      <Legend>Opzioni</Legend>
      <div className="flex items-center h-[16px] mt-[9px] ml-[23px]">
        <span className="w-[118px] mb-[6px]">Riempimenti bianchi</span><Sel>Mantieni riempimento</Sel>
      </div>
      <div className="flex items-center h-[16px] mt-[11px] ml-[23px]">
        <span className="w-[118px] mb-[6px]">Importa layer</span><Sel>Da layer</Sel>
      </div>
      <div className="flex items-center h-[16px] mt-[11px] ml-[23px]">
        <span className="w-[118px] mb-[6px]">Spessore linea minimo (mm)</span><Input w={62} right>0</Input>
      </div>
      <div className="flex items-center h-[10px] mt-[13px] ml-[24px]">
        <div className="w-[9px] h-[9px] bg-white border border-[#444] flex items-center justify-center">
          <svg width="7" height="7" viewBox="0 0 7 7"><path d="M.5 3.500L2.500 6 6.500 .5" stroke="#222" fill="none" /></svg>
        </div>
        <span className="ml-[2px]">Linee tratteggiate come segmenti</span>
      </div>
    </div>
    <div className="flex justify-end gap-[5px] pr-[8px] mt-[14px] text-[7.800px] text-[#333]">
      <div className="w-[51px] h-[15px] bg-[#e3e3e3] border-2 border-[#2a7db4] flex items-center justify-center">Converti &gt;</div>
      <div className="w-[50px] h-[15px] bg-[#e1e1e1] border border-[#adadad] flex items-center justify-center">Annulla</div>
    </div>
  </div>
);

export default function App() {
  return (
    <div className="relative w-[1320px] h-[724px] overflow-hidden bg-[#eeeeee] flex flex-col [text-rendering:geometricPrecision]">
      <TitleBar />
      <MenuBar />
      <Toolbar1 />
      <Toolbar2 />
      <div className="h-[570px] flex shrink-0">
        <LeftBar />
        <Panel />
        <Drawing />
        <RightBar />
      </div>
      <Command />
      <BottomBar />
      <Status />
      <div className="h-[2px] bg-[#1a1a1a] shrink-0" />
      <Dlg />
    </div>
  );
}
